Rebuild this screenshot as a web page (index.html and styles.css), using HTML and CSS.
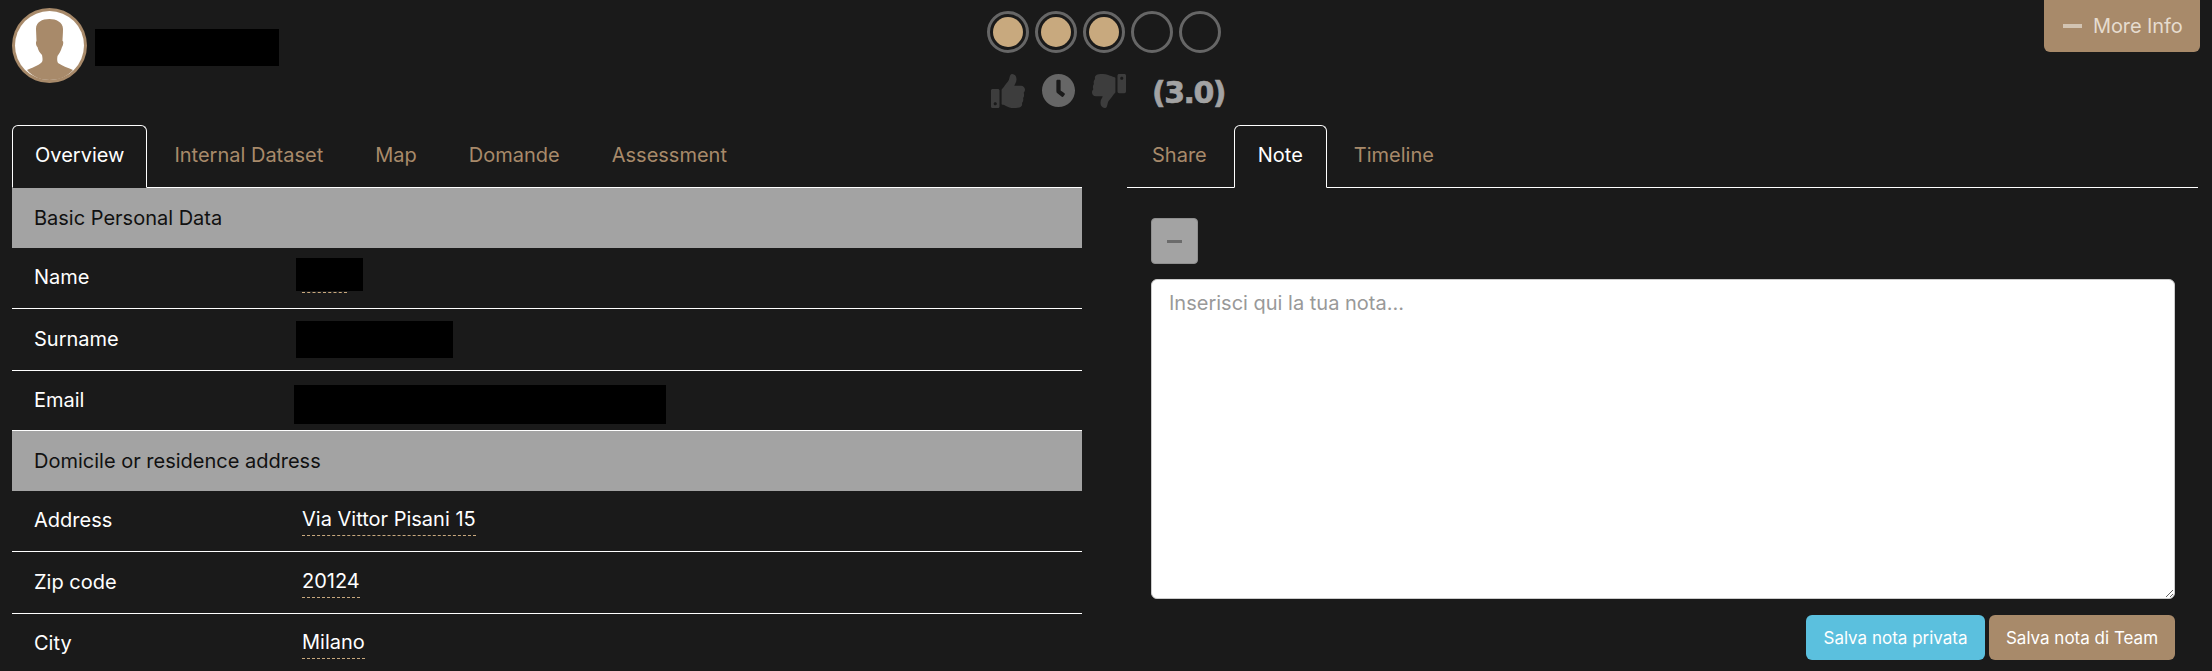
FILE: index.html
```html
<!DOCTYPE html>
<html lang="en">
<head>
<meta charset="utf-8">
<title>Profile</title>
<link rel="stylesheet" href="styles.css">
</head>
<body>
<header class="top">
  <div class="who">
    <span class="avatar">
      <svg viewBox="0 0 75 75" width="75" height="75"><circle cx="37.500" cy="37.500" r="37.500" fill="#a88a6a"/><circle cx="37.500" cy="37.500" r="34.500" fill="#fff"/><path d="M37.500 11C44 11 51 14 51 21C51 26 50.500 30 50.500 33C52 33 51 38 50 39C49 43 47 46 45.500 48C45 51 45 53 46 55C50 58 57 60 61 62C55 69 46 72 37.500 72C29 72 21 69 15 62C19 60 26 58 30 54C31 52 30.500 50 30 47C28 45 26 42 25.500 39C24 38 23.500 34 24.500 33C24.500 29 24 25 24 21C24 14 30 11 37.500 11Z" fill="#a88a6a"/></svg>
    </span>
    <span class="redact redact-title"></span>
  </div>
  <div class="rating">
    <div class="dots">
      <span class="dot on"></span><span class="dot on"></span><span class="dot on"></span><span class="dot"></span><span class="dot"></span>
    </div>
    <div class="votes">
      <svg class="ico thumb" viewBox="0 0 512 512"><path fill-rule="evenodd" d="M104 224H24c-13.255 0-24 10.745-24 24v240c0 13.255 10.745 24 24 24h80c13.255 0 24-10.745 24-24V248c0-13.255-10.745-24-24-24zM64 472c-13.255 0-24-10.745-24-24s10.745-24 24-24 24 10.745 24 24-10.745 24-24 24zM384 81.452c0 42.416-25.97 66.208-33.277 94.548h101.723c33.397 0 59.397 27.746 59.553 58.098.084 17.938-7.546 37.249-19.439 49.197l-.11.11c9.836 23.337 8.237 56.037-9.308 79.469 8.681 25.895-.069 57.704-16.382 74.757 4.298 17.598 2.244 32.575-6.148 44.632C440.202 511.587 389.616 512 346.839 512l-2.845-.001c-48.287-.017-87.806-17.598-119.56-31.725-15.957-7.099-36.821-15.887-52.651-16.178-6.54-.12-11.783-5.457-11.783-11.998v-213.77c0-3.2 1.282-6.271 3.558-8.521 39.614-39.144 56.648-80.587 89.117-113.111 14.804-14.832 20.188-37.236 25.393-58.902C282.515 39.293 291.817 0 312 0c24 0 72 8 72 81.452z"/></svg>
      <svg class="ico clock" viewBox="8 8 496 496"><path d="M256,8C119,8,8,119,8,256S119,504,256,504,504,393,504,256,393,8,256,8Zm92.49,313h0l-20,25a16,16,0,0,1-22.49,2.5h0l-67-49.72a40,40,0,0,1-15-31.23V112a16,16,0,0,1,16-16h32a16,16,0,0,1,16,16V256l58,42.5A16,16,0,0,1,348.49,321Z"/></svg>
      <svg class="ico thumb down" viewBox="0 0 512 512"><path fill-rule="evenodd" d="M104 224H24c-13.255 0-24 10.745-24 24v240c0 13.255 10.745 24 24 24h80c13.255 0 24-10.745 24-24V248c0-13.255-10.745-24-24-24zM64 472c-13.255 0-24-10.745-24-24s10.745-24 24-24 24 10.745 24 24-10.745 24-24 24zM384 81.452c0 42.416-25.97 66.208-33.277 94.548h101.723c33.397 0 59.397 27.746 59.553 58.098.084 17.938-7.546 37.249-19.439 49.197l-.11.11c9.836 23.337 8.237 56.037-9.308 79.469 8.681 25.895-.069 57.704-16.382 74.757 4.298 17.598 2.244 32.575-6.148 44.632C440.202 511.587 389.616 512 346.839 512l-2.845-.001c-48.287-.017-87.806-17.598-119.56-31.725-15.957-7.099-36.821-15.887-52.651-16.178-6.54-.12-11.783-5.457-11.783-11.998v-213.77c0-3.2 1.282-6.271 3.558-8.521 39.614-39.144 56.648-80.587 89.117-113.111 14.804-14.832 20.188-37.236 25.393-58.902C282.515 39.293 291.817 0 312 0c24 0 72 8 72 81.452z"/></svg>
      <span class="score">(3.0)</span>
    </div>
  </div>
  <div class="more">
    <button class="more-btn"><span class="dash"></span>More Info</button>
  </div>
</header>
<main class="cols">
  <section class="col-left">
    <nav class="tabs">
      <a class="tab active">Overview</a>
      <a class="tab">Internal Dataset</a>
      <a class="tab">Map</a>
      <a class="tab">Domande</a>
      <a class="tab">Assessment</a>
    </nav>
    <div class="section-head">Basic Personal Data</div>
    <div class="row r-name">
      <span class="label">Name</span>
      <span class="value"><span class="redact redact-name"></span><span class="redact-dash"></span></span>
    </div>
    <div class="row r-surname">
      <span class="label">Surname</span>
      <span class="value"><span class="redact redact-surname"></span></span>
    </div>
    <div class="row r-email">
      <span class="label">Email</span>
      <span class="value"><span class="redact redact-email"></span></span>
    </div>
    <div class="section-head">Domicile or residence address</div>
    <div class="row">
      <span class="label">Address</span>
      <span class="value"><span class="editable">Via Vittor Pisani 15</span></span>
    </div>
    <div class="row r-tall">
      <span class="label">Zip code</span>
      <span class="value"><span class="editable">20124</span></span>
    </div>
    <div class="row last">
      <span class="label">City</span>
      <span class="value"><span class="editable">Milano</span></span>
    </div>
  </section>
  <section class="col-right">
    <nav class="tabs tabs-right">
      <a class="tab">Share</a>
      <a class="tab active">Note</a>
      <a class="tab">Timeline</a>
    </nav>
    <div class="note">
      <button class="collapse"><span class="dash"></span></button>
      <textarea class="note-text" placeholder="Inserisci qui la tua nota..."></textarea>
      <div class="actions">
        <button class="btn btn-blue">Salva nota privata</button>
        <button class="btn btn-brown">Salva nota di Team</button>
      </div>
    </div>
  </section>
</main>
</body>
</html>
```
FILE: styles.css
```css
* { box-sizing: border-box; }
html, body { margin: 0; height: 671px; overflow: hidden; }
body { background: #1a1a1a; color: #fff; font-family: "Inter", "Liberation Sans", sans-serif; font-size: 20px; }

.top { display: grid; grid-template-columns: 975px 234px 1fr; height: 125px; padding: 0 12px; }
.who { display: flex; align-items: flex-start; padding-top: 8px; }
.avatar { display: block; width: 75px; height: 75px; }
.avatar svg { display: block; }
.redact { display: block; background: #000; }
.redact-title { width: 184px; height: 37px; margin: 21px 0 0 8px; }

.rating { padding-top: 11px; }
.dots { display: flex; gap: 6px; }
.dot { width: 42px; height: 42px; border: 3px solid #666; border-radius: 50%; padding: 3px; background-clip: content-box; }
.dot.on { background-color: #c8a97e; }
.votes { display: flex; align-items: flex-start; margin-top: 21px; padding-left: 4px; }
.ico { display: block; flex: none; width: 34px; height: 34px; fill: #3d3d3d; }
.clock { fill: #666; margin-left: 17px; width: 33px; height: 33px; }
.thumb.down { transform: rotate(180deg); margin-left: 17px; }
.score { flex: none; font-family: "DejaVu Sans", sans-serif; font-weight: 700; font-size: 30px; line-height: 37px; color: #a3a3a3; margin-left: 26px; white-space: nowrap; letter-spacing: -1.5px; -webkit-text-stroke: .6px #a3a3a3; }

.more { display: flex; justify-content: flex-end; align-items: flex-start; }
.more-btn { display: flex; align-items: center; width: 156px; height: 52px; padding: 0 0 0 19px; border: 0; border-radius: 0 0 6px 6px; background: #a88a6a; color: #e6dccf; font: inherit; letter-spacing: -.1px; }
.more-btn .dash { width: 19px; height: 4px; background: #d3c4b2; margin-right: 11px; }

.cols { display: grid; grid-template-columns: 1070px 1071px; column-gap: 45px; padding: 0 0 0 12px; }

.tabs { display: flex; height: 63px; border-bottom: 1px solid #fff; }
.tab { display: flex; align-items: center; height: 63px; padding: 0 24px 3px; margin-right: 2px; color: #a88a6a; border: 1px solid transparent; border-radius: 6px 6px 0 0; white-space: nowrap; }
.tab.active { color: #fff; background: #1a1a1a; border-color: #fff; border-bottom-color: #1a1a1a; padding: 0 23px 3px; }
.col-left .tab.active { padding: 0 22px 3px; }

.section-head { display: flex; align-items: center; height: 60px; padding: 0 0 0 22px; background: #a3a3a3; color: #111; }
.row { display: flex; align-items: center; height: 61px; padding: 0 0 2px 22px; border-bottom: 1px solid #fff; }
.row.last { border-bottom: 0; height: 60px; }
.r-tall, .r-surname { height: 62px; }
.r-email { height: 60px; }
.label { width: 262px; flex: none; }
.value { display: block; }
.editable { display: inline-block; margin: 2px 0 0 6px; line-height: 26px; padding-bottom: 3px; border-bottom: 1px dashed #c8a97e; }

.r-name .value { align-self: flex-start; padding-top: 10px; }
.redact-name { width: 67px; height: 33px; }
.redact-dash { display: block; width: 45px; margin: 1px 0 0 6px; border-bottom: 1px dashed #c8a97e; }
.r-surname .value { align-self: flex-start; padding-top: 12px; }
.redact-surname { width: 157px; height: 37px; }
.r-email .value { align-self: flex-start; padding-top: 14px; margin-left: -2px; }
.redact-email { width: 372px; height: 39px; }

.note { padding: 30px 23px 0 24px; }
.collapse { display: flex; align-items: center; justify-content: center; width: 47px; height: 46px; padding: 0; border: 1px solid #8f8f8f; border-radius: 4px; background: #a3a3a3; }
.collapse .dash { width: 15px; height: 3px; background: #6b6b6b; }
.note-text { display: block; width: 100%; height: 320px; margin-top: 15px; padding: 9px 17px; border: 1px solid #ccc; border-radius: 6px; background: #fff; font: inherit; line-height: 28px; resize: vertical; }
.note-text::placeholder { color: #999; opacity: 1; }
.actions { display: flex; justify-content: flex-end; gap: 4px; margin-top: 16px; }
.btn { height: 45px; padding: 1px 0 0; border: 0; border-radius: 6px; color: #fff; font: inherit; font-size: 17px; }
.btn-blue { width: 179px; background: #5bc0de; }
.btn-brown { width: 186px; background: #a88a6a; }
```
